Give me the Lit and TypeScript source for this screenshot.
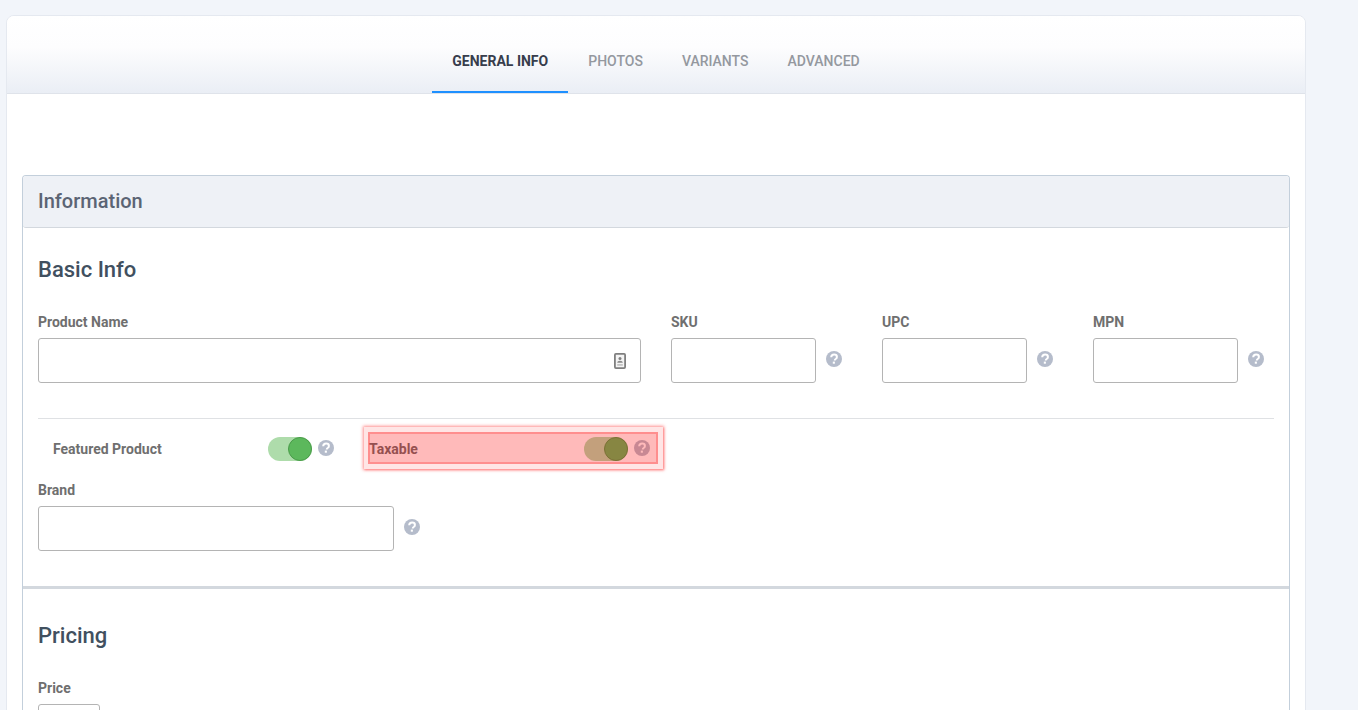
import { LitElement, html, css, svg } from "lit";
import { customElement } from "lit/decorators.js";

const help = html`<svg class="help" viewBox="0 0 16 16" aria-hidden="true"><circle cx="8" cy="8" r="8" fill="currentColor"/><path d="M5.2 6.2C5.3 4.6 6.5 3.6 8.1 3.6c1.7 0 2.8 1 2.8 2.3 0 1-.5 1.6-1.3 2.1-.7.4-.8.7-.8 1.3v.2" fill="none" stroke="#fff" stroke-width="2"/><rect x="6.8" y="10.6" width="2.1" height="2.1" fill="#fff"/></svg>`;
const card = svg`<rect x=".9" y=".9" width="10.2" height="14.2" rx="1" fill="#f4f4f4" stroke="#7f7f7f" stroke-width="1.8"/><circle cx="6" cy="5.4" r="1.5" fill="#808080"/><path d="M3.2 9.8c0-1.3 1.2-2.1 2.8-2.1s2.8.8 2.8 2.1z" fill="#8a8a8a"/><path d="M3.2 11h5.6v1.8H3.2z" fill="#c4c4c4"/>`;

@customElement("app-root")
export class AppRoot extends LitElement {
  static styles = css`
    :host { display: block; width: 1358px; height: 710px; overflow: hidden; background: #f2f5fa; font-family: Roboto, "Liberation Sans", sans-serif; position: relative; }
    .card { margin: 15px 0 0 6px; width: 1300px; height: 800px; box-sizing: border-box; background: #fff; border: 1px solid #e5e9f0; border-radius: 8px 8px 0 0; }
    .tabs { height: 78px; box-sizing: border-box; display: flex; justify-content: center; background: linear-gradient(#fff 0%, #fdfdfe 40%, #eaeef5 100%); border-bottom: 1px solid #dfe3ea; border-radius: 7px 7px 0 0; }
    .tab { box-sizing: border-box; height: 77px; padding: 37px 20px 0; text-align: center; font-size: 14px; line-height: 17px; font-weight: 500; color: #94989f; }
    .tab.tight { padding-right: 19px; }
    .tab.on { color: #373d4c; font-weight: 700; border-bottom: 2px solid #1e90ff; }
    .panel { margin: 81px 15px 0; border: 1px solid #c3cfdb; border-bottom: 0; border-radius: 4px 4px 0 0; }
    .panel-head { height: 52px; background: #eef1f6; border-bottom: 1px solid #d3d8de; border-radius: 3px; padding: 13px 15px 0; box-sizing: border-box; font-size: 20px; line-height: 24px; font-weight: 500; color: #5b6474; }
    .section { padding: 0 15px; }
    h2 { margin: 0; font-size: 22px; line-height: 26px; font-weight: 500; color: #41505f; }
    .basic { height: 361px; box-sizing: border-box; padding-top: 29px; border-bottom: 3px solid #d3d8de; }
    label { display: block; font-size: 14px; line-height: 16px; font-weight: 700; color: #6f6f6f; margin-bottom: 8px; }
    .row { display: flex; margin-top: 31px; }
    .field { display: block; flex: none; }
    .box { display: block; box-sizing: border-box; height: 45px; border: 1px solid #b4b4b4; border-radius: 3px; background: #fff; }
    .withhelp { display: flex; align-items: center; }
    .withhelp .help { margin-bottom: 4px; }
    .help { width: 16px; height: 16px; color: #b5bccb; display: block; flex: none; }
    .name { width: 603px; margin-right: 30px; }
    .name .box { display: flex; align-items: center; justify-content: flex-end; padding-right: 14px; }
    .name svg { width: 12px; height: 16px; display: block; margin-top: 1px; }
    .small { width: 171px; margin-right: 40px; }
    .small:last-child { margin-right: 0; }
    .small .box { width: 145px; margin-right: 10px; }
    .rule { height: 1px; background: #dfe1e4; margin-top: 35px; }
    .toggles { display: flex; align-items: center; height: 60px; padding-left: 15px; }
    .toggles .help { margin-bottom: 2px; }
    .t-label { font-size: 14px; font-weight: 700; color: #6f6f6f; line-height: 16px; }
    .t1 { width: 215px; }
    .t2 { width: 215px; }
    .switch { position: relative; width: 44px; height: 24px; border-radius: 12px; background: #aedcab; flex: none; }
    .switch i { position: absolute; right: 0; top: 0; width: 24px; height: 24px; box-sizing: border-box; border-radius: 50%; background: #5cb85c; border: 1px solid #4a9c4a; }
    .gap1 { width: 6px; } .gap2 { width: 35px; }
    .brand { margin-top: 3px; }
    .brand .box { width: 356px; margin-right: 10px; }
    .pricing { padding-top: 34px; }
    .price { margin-top: 31px; }
    .price .box { width: 62px; }
    .mark { position: absolute; left: 364px; top: 427px; width: 299px; height: 42px; box-sizing: border-box; box-shadow: 0 0 3px 1px rgba(255,40,40,.5), 1px 1px 2px rgba(255,0,0,.25); background: rgba(255,0,0,.1); padding: 5px 5px 5px 4px; }
    .mark b { display: block; height: 100%; box-sizing: border-box; background: rgba(255,0,0,.19); border: 2px solid rgba(255,60,60,.35); }
  `;
  render() {
    return html`<div class="card">
      <nav class="tabs">
        <div class="tab on">GENERAL INFO</div><div class="tab tight">PHOTOS</div><div class="tab tight">VARIANTS</div><div class="tab">ADVANCED</div>
      </nav>
      <div class="panel">
        <div class="panel-head">Information</div>
        <div class="section basic">
          <h2>Basic Info</h2>
          <div class="row">
            <div class="field name"><label>Product Name</label><div class="box"><svg viewBox="0 0 12 16">${card}</svg></div></div>
            ${["SKU", "UPC", "MPN"].map((l) => html`<div class="field small"><label>${l}</label><div class="withhelp"><div class="box"></div>${help}</div></div>`)}
          </div>
          <div class="rule"></div>
          <div class="toggles">
            <span class="t-label t1">Featured Product</span><span class="switch"><i></i></span><span class="gap1"></span>${help}<span class="gap2"></span>
            <span class="t-label t2">Taxable</span><span class="switch"><i></i></span><span class="gap1"></span>${help}
          </div>
          <div class="field brand"><label>Brand</label><div class="withhelp"><div class="box"></div>${help}</div></div>
        </div>
        <div class="section pricing">
          <h2>Pricing</h2>
          <div class="field price"><label>Price</label><div class="box"></div></div>
        </div>
      </div>
      </div>
      <div class="mark"><b></b></div>`;
  }
}
